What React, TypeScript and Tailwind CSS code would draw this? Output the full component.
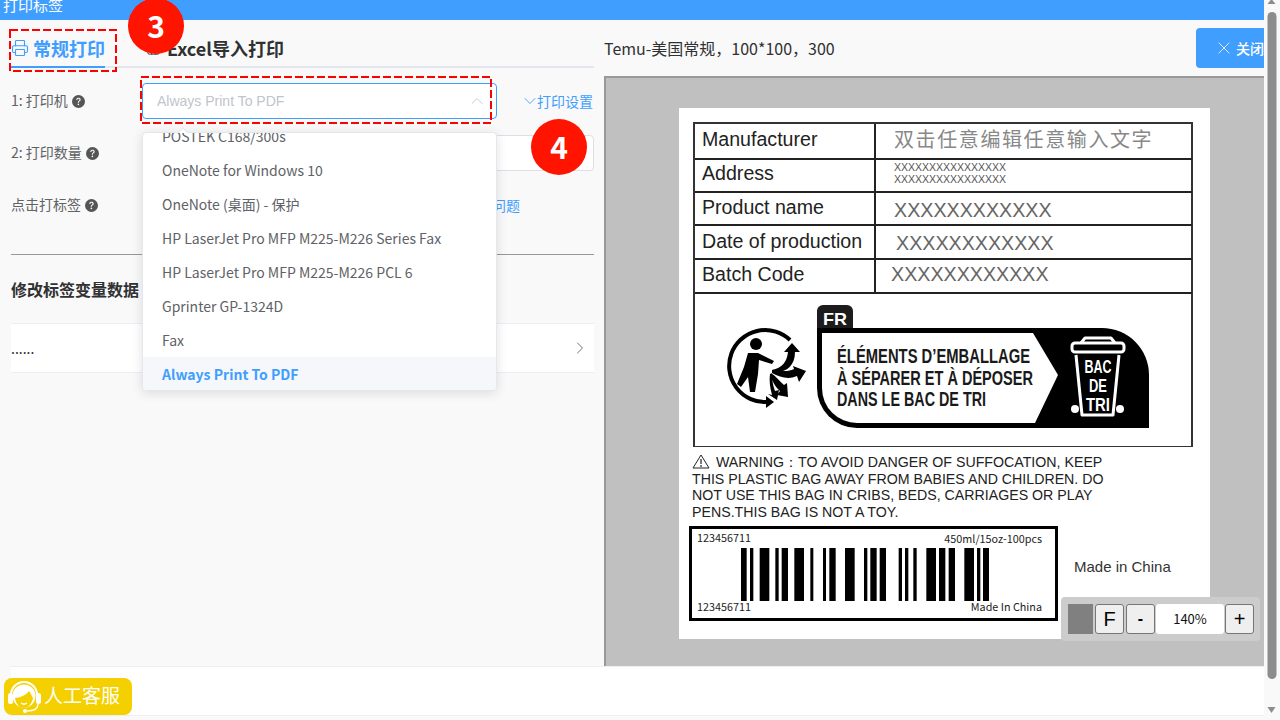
import { ChevronDown, ChevronRight, ChevronUp, Printer, Sheet, X } from 'lucide-react';
import { BsQuestionCircleFill } from 'react-icons/bs';

const printers = [
  'POSTEK C168/300s',
  'OneNote for Windows 10',
  'OneNote (桌面) - 保护',
  'HP LaserJet Pro MFP M225-M226 Series Fax',
  'HP LaserJet Pro MFP M225-M226 PCL 6',
  'Gprinter GP-1324D',
  'Fax',
  'Always Print To PDF',
];

// bar start / end, measured from the label
const bars = [
  [182, 199], [209, 219], [238, 267], [285, 295], [304, 323], [342, 371], [390, 399], [428, 437],
  [447, 466], [494, 523], [551, 561], [570, 589], [598, 617], [655, 665], [674, 684], [699, 709],
  [738, 767], [776, 795], [805, 824], [852, 881], [890, 900], [908, 928],
];

function Help() {
  return <BsQuestionCircleFill className="ml-[4px] inline-block text-[13px] text-[#555]" />;
}

function TrimanLogo() {
  return (
    <svg width="100" height="90" viewBox="0 0 100 90" className="shrink-0">
      <path d="M70 20 A36 36 0 1 0 47 82" fill="none" stroke="#000" strokeWidth="4" />
      <path d="M46 76 L54 82 L46 88 Z" fill="#000" />
      <circle cx="36" cy="24" r="6" fill="#000" />
      <path d="M28 33 L38 33 L54 41 L52 44 L39 40 L38 54 L35 72 L30 72 L28 57 L21 67 L17 64 L24 47 Z" fill="#000" />
      <path d="M52 50 C62 48 67 42 68 32 L64 32 L72 23 L80 32 L75 32 C75 46 66 53 54 52 Z" fill="#000" />
      <path d="M52 50 C62 51 68 52 74 49 L73 46 L86 51 L79 62 L77 56 C68 60 60 57 52 53 Z" fill="#000" />
      <path d="M51 53 C56 56 60 62 64 65 L67 63 L68 77 L57 75 L60 71 C55 67 52 60 50 55 Z" fill="#000" />
      <path d="M50 54 C49 60 50 68 52 75 L48 74 L57 80 L59 70 L55 71 C53 66 52 60 52 54 Z" fill="#000" />
    </svg>
  );
}

function TriBanner() {
  return (
    <svg width="332" height="125" viewBox="0 0 332 125" className="font-['Liberation_Sans',sans-serif]">
      <path d="M0 27 V6 A6 6 0 0 1 6 0 H30 A6 6 0 0 1 36 6 V27 Z" fill="#1c1c1c" />
      <text x="6" y="20" fontSize="17" fontWeight="700" fill="#fff" textLength="24" lengthAdjust="spacingAndGlyphs">FR</text>
      <path d="M0 23 H285 A47 47 0 0 1 332 70 V123 H40 A40 40 0 0 1 0 83 Z" fill="#000" />
      <path d="M5 28 H216 L241 70 L218 118 H40 A35 35 0 0 1 5 83 Z" fill="#fff" />
      <g fontSize="19.5" fontWeight="700" fill="#1a1a1a">
        <text x="20" y="58" textLength="193" lengthAdjust="spacingAndGlyphs">ÉLÉMENTS D’EMBALLAGE</text>
        <text x="20" y="80" textLength="196" lengthAdjust="spacingAndGlyphs">À SÉPARER ET À DÉPOSER</text>
        <text x="20" y="101" textLength="149" lengthAdjust="spacingAndGlyphs">DANS LE BAC DE TRI</text>
      </g>
      <g fill="none" stroke="#fff" strokeWidth="3" strokeLinejoin="round">
        <path d="M264 38 L268 33 H294 L298 38" />
        <rect x="255" y="38" width="52" height="9" rx="3" />
        <path d="M259 50 L265 110 H296 L302 50" />
      </g>
      <circle cx="258" cy="104" r="4" fill="#fff" />
      <circle cx="303" cy="104" r="4" fill="#fff" />
      <g fontSize="19" fontWeight="700" fill="#fff" textAnchor="middle">
        <text x="281" y="68" textLength="27" lengthAdjust="spacingAndGlyphs">BAC</text>
        <text x="281" y="87" textLength="18" lengthAdjust="spacingAndGlyphs">DE</text>
        <text x="281" y="106" textLength="24" lengthAdjust="spacingAndGlyphs">TRI</text>
      </g>
    </svg>
  );
}

function Barcode() {
  return (
    <svg width="248" height="53" viewBox="0 0 248 53" className="ml-[44px] block">
      {bars.map(([a, b]) => (
        <rect key={a} x={(a - 182) / 3} y="0" width={(b - a) / 3} height="53" fill="#000" />
      ))}
    </svg>
  );
}

function WarningSign() {
  return (
    <svg width="18" height="15" viewBox="0 0 18 15" className="mr-[6px] inline-block align-[-2px]">
      <path d="M9 1 L17 14 H1 Z" fill="none" stroke="#222" strokeWidth="1" />
      <path d="M9 5 V10 M9 11 V13" stroke="#222" strokeWidth="1.2" />
    </svg>
  );
}

function LabelRow({ name, height, nudge, children }: { name: string; height: string; nudge: string; children: React.ReactNode }) {
  return (
    <div className={`flex border-b-2 border-[#222] ${height}`}>
      <div className={`flex w-[181px] shrink-0 items-center border-r-2 border-[#222] pl-[7px] text-[19.6px] leading-none text-[#222] ${nudge}`}>
        {name}
      </div>
      {children}
    </div>
  );
}

function PaperLabel() {
  return (
    <div className="h-[531px] w-[531px] bg-white pt-[14px] pl-[14px] font-['Liberation_Sans',sans-serif]">
      <div className="h-[325px] w-[500px] border-2 border-b border-[#333]">
        <div className="w-[497px]">
          <LabelRow name="Manufacturer" height="h-[36px]" nudge="pb-[3px]">
            <div className="flex items-center pb-[5px] pl-[18px] font-['Noto_Sans_CJK_SC',sans-serif] text-[20px] leading-none tracking-[1.6px] text-[#888]">
              双击任意编辑任意输入文字
            </div>
          </LabelRow>
          <LabelRow name="Address" height="h-[33px]" nudge="pb-[4px]">
            <div className="flex flex-col justify-center pb-[5px] pl-[18px] text-[10.5px] leading-[12px] text-[#555]">
              <span>XXXXXXXXXXXXXXXX</span>
              <span>XXXXXXXXXXXXXXXX</span>
            </div>
          </LabelRow>
          <LabelRow name="Product name" height="h-[33px]" nudge="pb-[1px]">
            <div className="flex items-center pt-[4px] pl-[18px] text-[19.7px] leading-none text-[#666]">XXXXXXXXXXXX</div>
          </LabelRow>
          <LabelRow name="Date of production" height="h-[34px]" nudge="pb-0">
            <div className="flex items-center pt-[4px] pl-[20px] text-[19.7px] leading-none text-[#666]">XXXXXXXXXXXX</div>
          </LabelRow>
          <LabelRow name="Batch Code" height="h-[34px]" nudge="pb-[3px]">
            <div className="flex items-center pb-[3px] pl-[15px] text-[19.7px] leading-none text-[#666]">XXXXXXXXXXXX</div>
          </LabelRow>
        </div>
        <div className="flex h-[150px] items-start pt-[11px] pl-[25px]">
          <div className="pt-[15px]">
            <TrimanLogo />
          </div>
          <div className="-ml-[3px]">
            <TriBanner />
          </div>
        </div>
      </div>
      <p className="mt-[7px] w-[440px] -ml-[1px] text-[14.2px] leading-[16.7px] text-[#222]">
        <WarningSign />
        WARNING<span className="inline-block w-[14px]">：</span>TO AVOID DANGER OF SUFFOCATION, KEEP
        <br />
        THIS PLASTIC BAG AWAY FROM BABIES AND CHILDREN. DO
        <br />
        NOT USE THIS BAG IN CRIBS, BEDS, CARRIAGES OR PLAY
        <br />
        PENS.THIS BAG IS NOT A TOY.
      </p>
      <div className="-ml-[4px] mt-[5px] flex items-center">
        <div className="h-[95px] w-[369px] border-[3px] border-black px-[5px] font-['Noto_Sans_CJK_SC',sans-serif] text-[10.8px] leading-none text-[#222]">
          <div className="flex h-[19px] items-center justify-between pr-[8px] pb-[2px]">
            <span>123456711</span>
            <span className="pt-[2px]">450ml/15oz-100pcs</span>
          </div>
          <Barcode />
          <div className="flex h-[14px] items-center justify-between pr-[8px] pb-[2px]">
            <span>123456711</span>
            <span>Made In China</span>
          </div>
        </div>
        <span className="ml-[16px] pb-[12px] text-[15px] text-[#333]">Made in China</span>
      </div>
    </div>
  );
}

function ZoomBar() {
  const btn = 'flex h-[30px] items-center justify-center rounded-[3px] border border-[#767676] bg-[#efefef] text-black';
  return (
    <div className="absolute top-[519px] left-[455px] flex h-[44px] w-[199px] items-center gap-[2px] rounded-[4px] bg-[#cccccc] pl-[7px] font-['Liberation_Sans',sans-serif]">
      <div className="h-[30px] w-[25px] bg-[#808080]" />
      <div className={`${btn} w-[29px] text-[20px]`}>F</div>
      <div className={`${btn} w-[29px] text-[16px] font-bold`}>-</div>
      <div className="-mx-[1px] flex h-[30px] w-[68px] items-center justify-center rounded-[3px] bg-white font-['Noto_Sans_CJK_SC',sans-serif] text-[13px] text-[#111]">
        140%
      </div>
      <div className={`${btn} w-[29px] text-[20px]`}>+</div>
    </div>
  );
}

function PrinterDropdown() {
  return (
    <div className="absolute top-[112px] left-[131px] z-10 h-[259px] w-[355px] rounded-[4px] border border-[#e4e7ed] bg-white shadow-[0_2px_12px_rgba(0,0,0,0.12)]">
      <div className="absolute -top-[4px] left-[36px] h-[8px] w-[8px] rotate-45 border-t border-l border-[#e4e7ed] bg-white" />
      <div className="relative h-full overflow-hidden rounded-[4px]">
        <ul className="-mt-[14px]">
          {printers.map((p, i) => (
            <li
              key={p}
              className={
                i === printers.length - 1
                  ? 'flex h-[34px] items-center bg-[#f5f7fa] pl-[19px] text-[14px] font-bold text-[#409eff]'
                  : 'flex h-[34px] items-center pl-[19px] text-[14px] text-[#606266]'
              }
            >
              {p}
            </li>
          ))}
        </ul>
      </div>
    </div>
  );
}

function Marker({ n, className }: { n: string; className: string }) {
  return (
    <div
      className={`absolute z-20 flex h-[56px] w-[56px] items-center justify-center rounded-full bg-[#ff1400] pb-[1px] text-[30px] font-bold text-white ${className}`}
    >
      {n}
    </div>
  );
}

function DashBox({ w, h, className }: { w: number; h: number; className: string }) {
  return (
    <svg width={w} height={h} className={`absolute z-20 ${className}`}>
      <rect x="1" y="1" width={w - 2} height={h - 2} fill="none" stroke="#f00" strokeWidth="2" strokeDasharray="8 3" />
    </svg>
  );
}

function Headset() {
  return (
    <svg width="36" height="36" viewBox="0 0 36 36" className="shrink-0">
      <path d="M5 17 A13 13 0 0 1 31 17" fill="none" stroke="#fff" strokeWidth="2" />
      <circle cx="18" cy="18" r="11.5" fill="#fff" />
      <path d="M9 20 C14 20 20 17 23 13 C25 16 26 18 27 20 C26 26 22 30 18 30 C13 30 10 26 9 20 Z" fill="#f4d000" />
      <path d="M15 25 C17 26.5 19 26.5 21 25" fill="none" stroke="#fff" strokeWidth="1.5" />
      <rect x="2" y="15" width="5" height="11" rx="2.5" fill="#fff" />
      <rect x="30" y="15" width="5" height="11" rx="2.5" fill="#fff" />
      <path d="M32 26 C32 31 27 33 21 33" fill="none" stroke="#fff" strokeWidth="1.5" />
      <circle cx="19" cy="33" r="2" fill="#fff" />
    </svg>
  );
}

export default function App() {
  return (
    <div className="relative flex h-[720px] w-[1280px] overflow-hidden bg-[#f9f9f9] font-['Noto_Sans_CJK_SC',sans-serif]">
      <div className="flex w-[1264px] flex-col">
        <div className="h-[20px] overflow-hidden bg-[#409eff] pl-[3px] text-[15px] leading-[10px] text-white">打印标签</div>

        <div className="flex h-[646px]">
          {/* left: form */}
          <div className="relative ml-[11px] w-[583px] shrink-0">
            <div className="mt-[10px] flex h-[38px] border-b-2 border-[#e4e7ed] text-[18px] font-bold">
              <div className="-mb-[2px] flex h-[38px] w-[94px] items-center gap-[4px] border-b-2 border-[#409eff] whitespace-nowrap text-[#409eff]">
                <Printer size={18} strokeWidth={1.5} className="shrink-0" />
                常规打印
              </div>
              <div className="ml-[41px] flex items-center gap-[6px] text-[#303133]">
                <Sheet size={15} strokeWidth={1.5} />
                Excel导入打印
              </div>
            </div>

            <div className="mt-[15px] flex h-[36px] items-center text-[14px] text-[#606266]">
              <div className="w-[131px] pb-[2px]">
                1: 打印机
                <Help />
              </div>
              <div className="flex h-[36px] w-[355px] items-center justify-between rounded-[4px] border border-[#409eff] bg-white pr-[9px] pl-[14px] font-['Liberation_Sans',sans-serif] text-[14px] text-[#c0c4cc]">
                Always Print To PDF
                <ChevronUp size={20} strokeWidth={1.1} />
              </div>
              <div className="mr-[1px] ml-auto flex items-center text-[#409eff]">
                <ChevronDown size={20} strokeWidth={1.1} className="-mr-[3px]" />
                打印设置
              </div>
            </div>

            <div className="mt-[16px] flex h-[36px] items-center text-[14px] text-[#606266]">
              <div className="w-[131px] pb-[2px]">
                2: 打印数量
                <Help />
              </div>
              <div className="h-[36px] flex-1 rounded-[4px] border border-[#dcdfe6] bg-white" />
            </div>

            <div className="mt-[16px] flex h-[36px] items-center text-[14px] text-[#606266]">
              <div className="w-[131px] pb-[2px]">
                点击打标签
                <Help />
              </div>
              <span className="ml-[350px] text-[#409eff]">问题</span>
            </div>

            <div className="mt-[31px] h-px bg-[#999]" />
            <div className="mt-[23px] text-[16px] leading-[22px] font-bold text-[#303133]">修改标签变量数据</div>
            <div className="mt-[23px] flex h-[50px] items-center justify-between border-y border-[#ebeef5] bg-white pr-[4px] text-[14px] text-[#303133]">
              ......
              <ChevronRight size={20} strokeWidth={1} className="text-[#555]" />
            </div>

            <PrinterDropdown />
          </div>

          {/* right: preview */}
          <div className="ml-[10px] flex w-[660px] flex-col">
            <div className="flex h-[56px] items-center justify-between">
              <span className="text-[16px] text-[#303133]">Temu-美国常规，100*100，300</span>
              <div className="flex h-[40px] w-[68px] items-center gap-[2px] overflow-hidden rounded-l-[4px] bg-[#409eff] pl-[18px] text-[14px] font-medium whitespace-nowrap text-white">
                <X size={20} strokeWidth={1} className="shrink-0" />
                关闭
              </div>
            </div>
            <div className="relative h-[590px] border-t-2 border-l-2 border-[#999] bg-[#c0c0c0] pt-[30px] pl-[73px]">
              <PaperLabel />
              <ZoomBar />
            </div>
          </div>
        </div>

        <div className="ml-[11px] h-[50px] border-y border-[#ebeef5] bg-white" />
      </div>

      {/* scrollbar */}
      <div className="flex w-[16px] flex-col items-center bg-[#f9f9f9]">
        <div className="mt-[-1px] h-0 w-0 -translate-x-[0.5px] border-x-[4px] border-b-[5px] border-x-transparent border-b-[#8c8c8c]" />
        <div className="mt-[8px] h-[667px] w-[9px] -translate-x-[0.5px] rounded-[5px] bg-[#8c8c8c]" />
        <div className="mt-[28px] h-0 w-0 -translate-x-[0.5px] border-x-[4px] border-t-[6px] border-x-transparent border-t-[#8c8c8c]" />
      </div>

      {/* annotations over the screenshot */}
      <Marker n="3" className="-top-[2px] left-[128px]" />
      <Marker n="4" className="top-[119px] left-[531px]" />
      <DashBox w={108} h={43} className="top-[29px] left-[9px]" />
      <DashBox w={352} h={48} className="top-[76px] left-[140px]" />

      {/* floating help button */}
      <div className="absolute top-[678px] left-[4px] z-20 flex h-[37px] w-[128px] items-center gap-[2px] rounded-[8px] bg-[#f4d000] pb-[2px] pl-[2px] text-[19px] text-white">
        <Headset />
        人工客服
      </div>
    </div>
  );
}
